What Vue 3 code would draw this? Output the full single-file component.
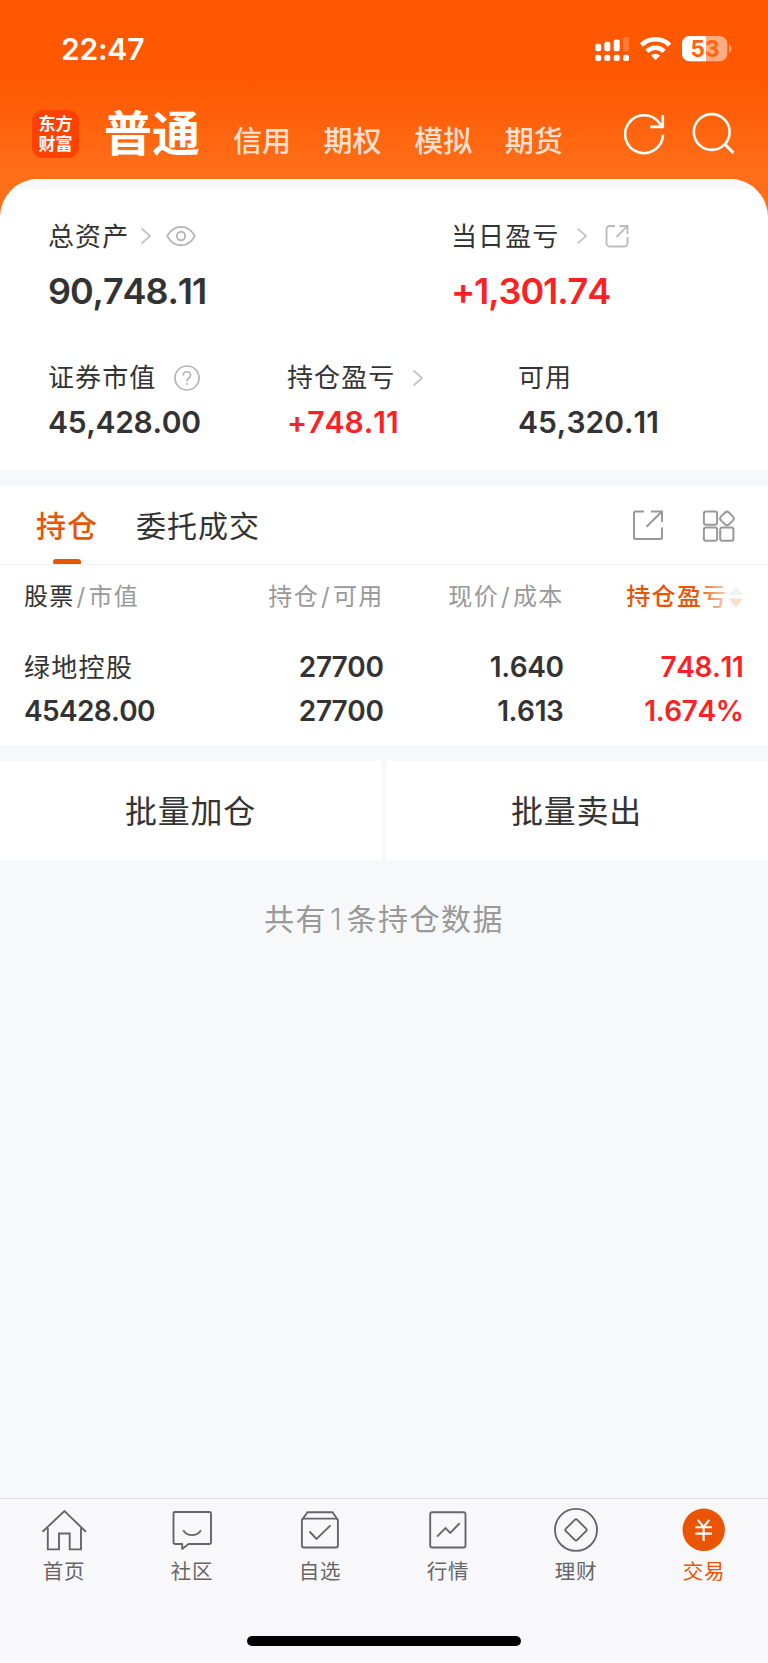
<script setup>
const accounts = ['信用', '期权', '模拟', '期货']
const tabs = [
  { key: 'home', label: '首页' },
  { key: 'community', label: '社区' },
  { key: 'watch', label: '自选' },
  { key: 'market', label: '行情' },
  { key: 'wealth', label: '理财' },
  { key: 'trade', label: '交易', active: true },
]
</script>

<template>
  <div class="screen">
    <header class="top">
      <div class="status">
        <span class="time">22:47</span>
        <svg class="status-icons" width="140" height="30" viewBox="592 34 140 30">
          <g fill="#fff">
            <rect x="595.2" y="43.7" width="6" height="7.6" rx="2" />
            <rect x="604.3" y="41.8" width="6" height="9.5" rx="2" />
            <rect x="613.7" y="39.4" width="6" height="11.9" rx="2" />
            <rect x="623" y="37" width="6" height="14.3" rx="2" opacity=".22" />
            <rect x="595.2" y="54.8" width="6" height="6.2" rx="2" />
            <rect x="604.3" y="54.8" width="6" height="6.2" rx="2" />
            <rect x="613.7" y="54.8" width="6" height="6.2" rx="2" />
            <rect x="623" y="54.8" width="6" height="6.2" rx="2" />
            <path d="M655.5 60.2l4.600-4.600a6.600 6.600 0 0 0-9.200 0z" />
          </g>
          <g fill="none" stroke="#fff" stroke-width="4.500">
            <path d="M641.400 45.100a20 20 0 0 1 28.200 0" />
            <path d="M646.900 51.300a12.200 12.200 0 0 1 17.200 0" />
          </g>
          <rect x="682" y="36" width="45.300" height="25.200" rx="7.500" fill="#fff" opacity=".5" />
          <path d="M706 36v25.200h-16.500a7.500 7.500 0 0 1-7.500-7.500v-10.200a7.500 7.500 0 0 1 7.500-7.500z" fill="#fff" />
          <path d="M729 44.800c3.200 1.200 3.200 6.800 0 8z" fill="#fff" opacity=".5" />
          <text x="705" y="56.600" text-anchor="middle" class="battery">53</text>
        </svg>
      </div>
      <div class="nav">
        <div class="logo"><span>东方</span><span>财富</span></div>
        <h1>普通</h1>
        <nav class="accounts"><span v-for="a in accounts" :key="a">{{ a }}</span></nav>
        <svg class="nav-icons" width="112" height="44" viewBox="624 112 112 44" fill="none" stroke="#fff" stroke-width="2.600">
          <path d="M662.900 134.800a18.900 18.900 0 1 1-3.600-11.700L663 126.600M662.800 115v11.900H650.200" />
          <circle cx="711.700" cy="132" r="17.900" />
          <path d="M724.400 143.900l9 9" stroke-width="2.900" />
        </svg>
      </div>
    </header>

    <section class="card">
      <div class="strip"></div>
      <div class="assets">
        <div class="cell">
          <div class="label">
            总资产
            <svg class="chev" width="12" height="18" viewBox="0 0 12 18"><path d="M1.500 1.500l8.500 7.500l-8.500 7.500" /></svg>
            <svg class="eye" width="30" height="22" viewBox="0 0 30 22" fill="none" stroke="#b5b5b5" stroke-width="1.900">
              <path d="M1.200 11C8-1.600 22-1.600 28.800 11C22 23.600 8 23.600 1.200 11z" transform="translate(0 .4) scale(1 .97)" />
              <circle cx="15" cy="11" r="4.200" />
            </svg>
          </div>
          <div class="big">90,748.11</div>
        </div>
        <div class="cell day">
          <div class="label">
            当日盈亏
            <svg class="chev" width="12" height="18" viewBox="0 0 12 18"><path d="M1.500 1.500l8.500 7.500l-8.500 7.500" /></svg>
            <svg class="share" width="24" height="24" viewBox="0 0 24 24" fill="none" stroke="#bcbcbc" stroke-width="1.900">
              <path d="M10 2H5a3.500 3.500 0 0 0-3.500 3.500v13.500A3.500 3.500 0 0 0 5 22.500h14a3.500 3.500 0 0 0 3.500-3.500v-6M14.500 2h8v8M22.300 2.200L11.500 13" />
            </svg>
          </div>
          <div class="big up">+1,301.74</div>
        </div>
      </div>
      <div class="breakdown">
        <div class="cell">
          <div class="label">
            证券市值
            <svg class="help" width="26" height="26" viewBox="0 0 26 26" fill="none" stroke="#b5b5b5" stroke-width="1.700">
              <circle cx="13" cy="13" r="12" />
              <path d="M9.200 10.500c0-5 7.400-4.900 7.400-.3c0 2.700-3.600 3-3.600 6.300" />
              <circle cx="13" cy="19" r="1.100" fill="#b5b5b5" stroke="none" />
            </svg>
          </div>
          <div class="mid value">45,428.00</div>
        </div>
        <div class="cell">
          <div class="label">
            持仓盈亏
            <svg class="chev" width="12" height="18" viewBox="0 0 12 18"><path d="M1.500 1.500l8.500 7.500l-8.500 7.500" /></svg>
          </div>
          <div class="mid up">+748.11</div>
        </div>
        <div class="cell">
          <div class="label">可用</div>
          <div class="mid">45,320.11</div>
        </div>
      </div>
    </section>

    <section class="holdings">
      <div class="tabs">
        <span class="tab active">持仓</span>
        <span class="tab">委托成交</span>
        <svg class="tools" width="104" height="34" viewBox="632 509 104 34" fill="none" stroke="#999" stroke-width="2">
          <path d="M644 511.500h-8.500a1.500 1.500 0 0 0-1.500 1.500v24.500a1.500 1.500 0 0 0 1.500 1.500h25a1.500 1.500 0 0 0 1.500-1.500v-10M651 511.500h11v10.500M661.500 512L646.500 526.800" />
          <rect x="703.900" y="511.500" width="13.200" height="13.200" rx="2" />
          <rect x="703.900" y="527.500" width="13.200" height="13.200" rx="2" />
          <rect x="720.200" y="527.500" width="13.200" height="13.200" rx="2" />
          <rect x="721.400" y="512.900" width="11.200" height="11.200" rx="3" transform="rotate(45 727 518.500)" />
        </svg>
      </div>
      <div class="row head">
        <span class="left"><b>股票</b><i>/</i>市值</span>
        <span>持仓<i>/</i>可用</span>
        <span>现价<i>/</i>成本</span>
        <span class="sort">
          持仓盈亏
          <svg width="16" height="22" viewBox="0 0 16 22"><path d="M8 .5L15.300 9H.7z" fill="#bbb" /><path d="M8 21.500L15.300 12.500H.7z" fill="#ea5504" /></svg>
        </span>
      </div>
      <div class="row data first">
        <span class="left name">绿地控股</span><span>27700</span><span>1.640</span><span class="up">748.11</span>
      </div>
      <div class="row data">
        <span class="left value">45428.00</span><span>27700</span><span>1.613</span><span class="up">1.674%</span>
      </div>
    </section>

    <div class="actions">
      <button>批量加仓</button>
      <button>批量卖出</button>
    </div>
    <p class="summary">共有<span>1</span>条持仓数据</p>

    <footer class="bar">
      <div class="items">
        <div v-for="t in tabs" :key="t.key" class="item" :class="{ on: t.active }">
          <svg width="48" height="48" viewBox="0 0 48 48" fill="none" stroke="#666" stroke-width="1.900">
            <g v-if="t.key === 'home'">
              <path d="M2.500 25.800L24.400 5L45.900 25.800" />
              <path d="M7.800 22V43.400H19V27.500H29.700V43.400H41V22" />
            </g>
            <g v-else-if="t.key === 'community'">
              <path d="M7 6h34.500a1.500 1.500 0 0 1 1.500 1.500v29a1.500 1.500 0 0 1-1.500 1.500H20.500L14.200 43V38H7a1.500 1.500 0 0 1-1.500-1.500v-29A1.500 1.500 0 0 1 7 6z" stroke-linejoin="round" />
              <path d="M15.200 24.200c4.500 6.600 13.300 6.600 17.800 0" />
            </g>
            <g v-else-if="t.key === 'watch'">
              <rect x="5.900" y="12.600" width="36" height="28.900" rx="2" />
              <path d="M6.200 13.500L11.500 6.200H36.500L41.600 13.500M13.500 25.500L20.500 33L34.500 19.400" />
            </g>
            <g v-else-if="t.key === 'market'">
              <rect x="6.200" y="6.200" width="35.300" height="35.300" rx="2" />
              <path d="M13 30.600L21.500 22L26.200 26.900L35.700 17.200" />
            </g>
            <g v-else-if="t.key === 'wealth'">
              <circle cx="24" cy="23.900" r="21" />
              <rect x="16" y="15.900" width="16" height="16" rx="1.800" transform="rotate(45 24 23.900)" />
            </g>
            <g v-else stroke="#fff" stroke-width="2.100">
              <circle cx="23.700" cy="23.800" r="21.200" fill="#ea5504" stroke="none" />
              <path d="M17.800 13.800L23.600 21L29.300 13.800M23.600 21V35M15.400 21.200H32M15.400 27.600H32" />
            </g>
          </svg>
          <span>{{ t.label }}</span>
        </div>
      </div>
      <div class="home-indicator"></div>
    </footer>
  </div>
</template>

<style>
body { margin: 0; background: #f7f8fa; }
</style>

<style scoped>
* { box-sizing: border-box; }
.screen {
  width: 768px; height: 1663px; display: flex; flex-direction: column;
  background: linear-gradient(#ff5800 80px, #ff6f1a 175px, #ff6f1a 240px, #f7f8fa 240px);
  font-family: Inter, "Noto Sans CJK SC", sans-serif; color: #333; overflow: hidden;
}
.top { height: 179px; flex: none; }
.status { display: flex; justify-content: space-between; padding: 34px 36px 0 61px; height: 98px; }
.time { font-size: 30px; line-height: 30px; font-weight: 600; color: #fff; letter-spacing: -.2px; }
.battery { font: 700 22.500px Inter, sans-serif; fill: #ff6414; }
.nav { display: flex; padding-left: 32px; }
.logo {
  width: 47px; height: 48px; margin-top: 12px; border-radius: 11px; background: #ff4200; color: #fff;
  display: flex; flex-direction: column; align-items: center; padding-top: 4px;
  font: 700 17px/20px Inter, "Noto Sans CJK SC", sans-serif;
}
h1 { margin: 12px 0 0 25px; width: 103px; font-size: 48px; line-height: 48px; font-weight: 700; color: #fff; }
.accounts { display: flex; gap: 32.600px; margin: 29px 0 0 26px; width: 365px; font-size: 29px; line-height: 30px; font-weight: 500; color: #ffe0d0; white-space: nowrap; }
.nav-icons { margin-top: 14px; margin-left: 26px; flex: none; }

.card { height: 291px; flex: none; background: #fff; border-radius: 38px 38px 0 0; overflow: hidden; }
.strip { height: 10px; background: #f7f8fa; border-top: 1px solid #fff; }
.assets { display: flex; padding: 32px 48px 0; height: 138px; }
.assets .cell { width: 403px; flex: none; }
.breakdown { display: flex; padding: 35px 48px 0; }
.breakdown .cell { width: 239px; flex: none; }
.breakdown .cell:nth-child(2) { width: 231px; }
.breakdown .cell:nth-child(3) { width: 180px; }
.label { display: flex; align-items: center; height: 32px; font-size: 26px; line-height: 32px; letter-spacing: 1.100px; white-space: nowrap; }
.assets .cell.day { width: 260px; }
.chev { fill: none; stroke: #c4c4c4; stroke-width: 1.800; margin-left: 11px; }
.day .chev, .breakdown .chev { margin-left: 17px; }
.assets .label svg { margin-bottom: 2px; }
.eye { margin-left: 14px; }
.share { margin-left: 17px; }
.help { margin-left: 18px; }
.big, .mid, .data { font-kerning: none; font-feature-settings: "calt" 0; }
.big { font-size: 36px; line-height: 40px; font-weight: 600; margin-top: 18px; letter-spacing: -1.100px; }
.mid { font-size: 30px; line-height: 34px; font-weight: 600; margin-top: 11px; }
.mid.value { letter-spacing: -.3px; }
.up { color: #fb2224; }

.holdings { margin-top: 16px; background: #fff; height: 259px; flex: none; }
.tabs { display: flex; height: 79px; border-bottom: 1px solid #f0f1f3; padding: 0 32px 0 36px; align-items: stretch; }
.tab { font-size: 30px; line-height: 80px; letter-spacing: 1px; margin-right: 38px; position: relative; }
.tab.active { color: #ea5504; font-weight: 500; }
.tab.active::after { content: ""; position: absolute; left: 17px; bottom: 0; width: 28px; height: 5px; border-radius: 3px 3px 1px 1px; background: #ea5504; }
.tools { margin: 23px 0 0 auto; }
.row { display: grid; grid-template-columns: 184px 175.500px 180px 180px; padding-left: 24px; text-align: right; white-space: nowrap; }
.left { text-align: left; }
.head { font-size: 24px; line-height: 64px; height: 80px; color: #999; letter-spacing: 1.300px; }
.head b { font-weight: 400; color: #333; }
.head i { font-style: normal; margin: 0 2px; }
.sort { color: #ea5504; display: flex; justify-content: flex-end; align-items: center; height: 64px; position: relative; font-weight: 500; }
.sort::after { content: ""; position: absolute; right: -2px; top: 16px; width: 50px; height: 32px; background: linear-gradient(90deg, #fff0, #fffc 34px); }
.data { font-size: 28px; line-height: 44px; height: 44px; font-weight: 600; letter-spacing: -.4px; }
.data .value { letter-spacing: -.65px; }
.name { font-size: 26px; font-weight: 400; letter-spacing: 1.300px; line-height: 45px; }

.actions { display: flex; gap: 4px; height: 115px; flex: none; padding-top: 16px; background: #f7f8fa; }
button { flex: 1; border: 0; padding: 2px 1px 0 0; background: #fff; font: 400 32px/97px Inter, "Noto Sans CJK SC", sans-serif; color: #333; letter-spacing: .8px; }
.summary { margin: 0; padding-top: 39px; text-align: center; font-size: 30px; line-height: 40px; color: #999; letter-spacing: 1.500px; }
.summary span { font-weight: 300; margin: 0 3px; }

.bar { margin-top: auto; height: 165px; flex: none; border-top: 1px solid #e0e0e3; background: #f8f8fb; }
.items { display: flex; padding-top: 7px; height: 137px; }
.item { flex: 1; display: flex; flex-direction: column; align-items: center; font-size: 20.500px; line-height: 30px; letter-spacing: .8px; color: #666; }
.item.on { color: #ea5504; }
.item span { margin-top: 3px; }
.home-indicator { width: 274px; height: 10px; border-radius: 5px; background: #000; margin: 0 auto; }
</style>
